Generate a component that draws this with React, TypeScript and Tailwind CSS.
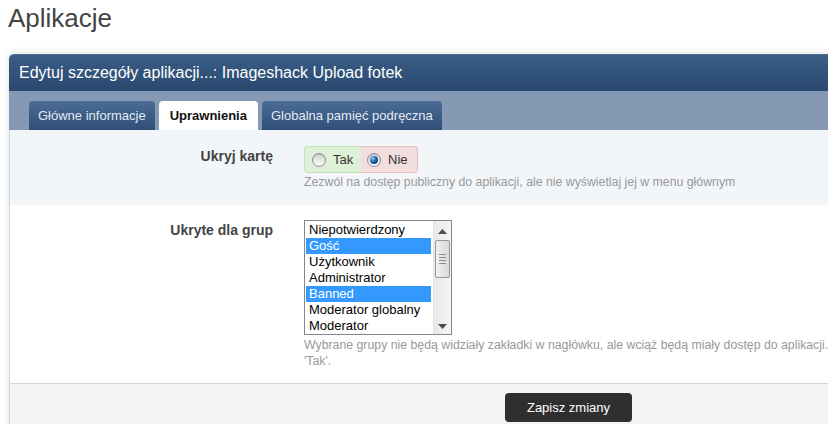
import React from 'react'

const GROUPS = [
  { name: 'Niepotwierdzony', selected: false },
  { name: 'Gość', selected: true },
  { name: 'Użytkownik', selected: false },
  { name: 'Administrator', selected: false },
  { name: 'Banned', selected: true },
  { name: 'Moderator globalny', selected: false },
  { name: 'Moderator', selected: false },
]

const TABS = [
  { label: 'Główne informacje', active: false },
  { label: 'Uprawnienia', active: true },
  { label: 'Globalna pamięć podręczna', active: false },
]

function Radio({ checked }: { checked?: boolean }) {
  return (
    <span className="flex h-[14px] w-[14px] items-center justify-center rounded-full border border-[#8e8f8f] bg-gradient-to-b from-[#d6d6d6] to-[#fbfbfb] shadow-[inset_0_1px_1px_rgba(0,0,0,0.15)]">
      {checked && (
        <span className="h-[8px] w-[8px] rounded-full bg-[radial-gradient(circle_at_35%_30%,#8cc8f5,#175a9e_50%,#082b55)]" />
      )}
    </span>
  )
}

function ScrollBar() {
  return (
    <div className="flex w-[18px] flex-col items-center border-l border-[#e3e3e3] bg-gradient-to-r from-[#e9e9e9] to-[#f5f5f5]">
      <svg width="9" height="5" viewBox="0 0 9 5" className="mt-[8px]">
        <path d="M4.5 0 L9 5 L0 5 Z" fill="#4a4a4a" />
      </svg>
      <div className="mt-[6px] flex h-[38px] w-[15px] flex-col items-center justify-center gap-[2px] rounded-[2px] border border-[#979797] bg-gradient-to-r from-[#f0f0f0] to-[#d9d9d9]">
        <span className="h-px w-[7px] bg-[#8a8a8a]" />
        <span className="h-px w-[7px] bg-[#8a8a8a]" />
        <span className="h-px w-[7px] bg-[#8a8a8a]" />
        <span className="h-px w-[7px] bg-[#8a8a8a]" />
      </div>
      <div className="flex-1" />
      <svg width="9" height="5" viewBox="0 0 9 5" className="mb-[5px]">
        <path d="M0 0 L9 0 L4.5 5 Z" fill="#4a4a4a" />
      </svg>
    </div>
  )
}

export default function App() {
  return (
    <div className="h-[424px] w-[828px] overflow-hidden bg-white font-['Liberation_Sans',Arial,sans-serif]">
      <h1 className="ml-[8px] mt-[3px] text-[26px] leading-[30px] text-[#444]">Aplikacje</h1>

      <div className="ml-[9px] mt-[21px] w-[1118px] rounded-t-[5px] shadow-[0_0_8px_rgba(0,0,0,0.13)]">
        {/* header */}
        <div className="flex h-[37px] items-center rounded-t-[5px] border-t border-[#4d6f97] bg-gradient-to-b from-[#3b5d86] to-[#28486f] pl-[10px] text-[16px] text-white">
          Edytuj szczegóły aplikacji...: Imageshack Upload fotek
        </div>

        {/* tabs */}
        <div className="flex h-[39px] items-end gap-[4px] bg-[#8599b4] pl-[20px]">
          {TABS.map(t =>
            t.active ? (
              <div key={t.label} className="flex h-[29px] items-center rounded-t-[4px] bg-white px-[11px] text-[13px] font-bold text-[#111]">
                {t.label}
              </div>
            ) : (
              <div key={t.label} className="flex h-[29px] items-center rounded-t-[4px] bg-gradient-to-b from-[#4a6c95] to-[#2f4f78] px-[9px] text-[13px] text-[#e3eaf2]">
                {t.label}
              </div>
            )
          )}
        </div>

        <div className="border-l border-[#c8d9ea]">
          {/* Ukryj kartę */}
          <div className="grid grid-cols-[263px_1fr] gap-x-[31px] bg-[#f3f6f9] pb-[15px] pt-[16px]">
            <div className="text-right text-[14px] font-bold leading-[20px] text-[#444]">Ukryj kartę</div>
            <div>
              <div className="flex h-[27px] w-[114px] text-[13px] text-[#333]">
                <label className="flex w-[57px] items-center gap-[5px] rounded-l-[4px] border border-r-0 border-[#bfe2b6] bg-[#dff0d8] pl-[7px]">
                  <Radio />
                  <span className="ml-[2px]">Tak</span>
                </label>
                <label className="flex flex-1 items-center gap-[5px] rounded-r-[4px] border border-l-0 border-[#e8c0c0] bg-[#f2dede] pl-[6px]">
                  <Radio checked />
                  <span className="ml-[2px]">Nie</span>
                </label>
              </div>
              <p className="mt-[1px] whitespace-nowrap text-[12.3px] leading-[16px] text-[#999]">
                Zezwól na dostęp publiczny do aplikacji, ale nie wyświetlaj jej w menu głównym
              </p>
            </div>
          </div>

          {/* Ukryte dla grup */}
          <div className="grid grid-cols-[263px_1fr] gap-x-[31px] bg-white pb-[14px] pt-[15px]">
            <div className="text-right text-[14px] font-bold leading-[20px] text-[#444]">Ukryte dla grup</div>
            <div>
              <div className="flex h-[115px] w-[148px] border border-[#828790] bg-white">
                <div className="flex-1 pl-px pr-[2px] pt-px">
                  {GROUPS.map(g => (
                    <div
                      key={g.name}
                      className={
                        g.selected
                          ? 'h-[16px] bg-[#3399ff] pl-[3px] text-[13px] leading-[16px] text-white'
                          : 'h-[16px] pl-[3px] text-[13px] leading-[16px] text-black'
                      }
                    >
                      {g.name}
                    </div>
                  ))}
                </div>
                <ScrollBar />
              </div>
              <p className="mt-[2px] whitespace-nowrap text-[12.3px] leading-[16px] text-[#999]">
                Wybrane grupy nie będą widziały zakładki w nagłówku, ale wciąż będą miały dostęp do aplikacji. Opcja działa tylko wtedy, gdy 'Ukryj kartę' ustawione jest na
                <br />
                'Tak'.
              </p>
            </div>
          </div>

          {/* footer */}
          <div className="flex justify-center border-t border-[#d5d5d5] bg-[#f4f4f4] pb-[12px] pt-[9px]">
            <button className="h-[29px] rounded-[4px] bg-[#2f2f2f] px-[22px] text-[13px] text-white">Zapisz zmiany</button>
          </div>
        </div>
      </div>
    </div>
  )
}
